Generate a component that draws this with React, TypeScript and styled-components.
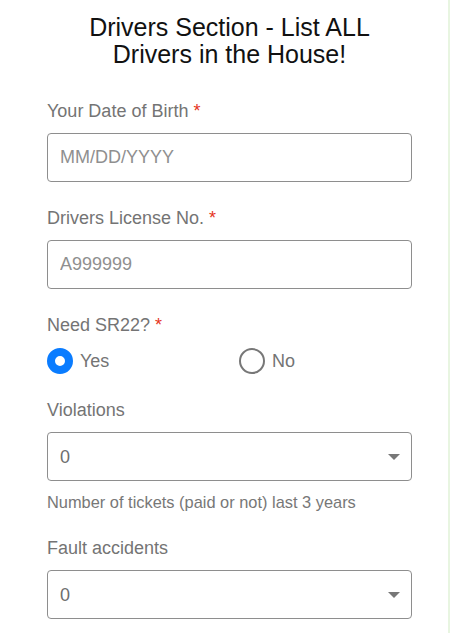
import React from "react";
import styled, { createGlobalStyle } from "styled-components";

const GlobalStyle = createGlobalStyle`
  html, body {
    margin: 0;
    padding: 0;
    background: #fff;
  }
  body {
    font-family: "Liberation Sans", Arial, Helvetica, sans-serif;
  }
  * {
    box-sizing: border-box;
  }
`;

const App = () => {
  return (
    <Page>
      <GlobalStyle />
      <Form>
        <Title>
          Drivers Section - List ALL
          <br />
          Drivers in the House!
        </Title>

        <Field>
          <Label>
            Your Date of Birth <Required>*</Required>
          </Label>
          <TextInput type="text" placeholder="MM/DD/YYYY" />
        </Field>

        <Field>
          <Label>
            Drivers License No. <Required>*</Required>
          </Label>
          <TextInput type="text" placeholder="A999999" />
        </Field>

        <Field>
          <Label>
            Need SR22? <Required>*</Required>
          </Label>
          <RadioGroup>
            <RadioOption>
              <Radio type="radio" name="sr22" defaultChecked />
              <RadioText>Yes</RadioText>
            </RadioOption>
            <RadioOption>
              <Radio type="radio" name="sr22" />
              <RadioText>No</RadioText>
            </RadioOption>
          </RadioGroup>
        </Field>

        <Field>
          <Label>Violations</Label>
          <SelectWrap>
            <Select defaultValue="0">
              <option value="0">0</option>
              <option value="1">1</option>
              <option value="2">2</option>
              <option value="3">3+</option>
            </Select>
            <Caret />
          </SelectWrap>
          <Helper>Number of tickets (paid or not) last 3 years</Helper>
        </Field>

        <Field>
          <Label>Fault accidents</Label>
          <SelectWrap>
            <Select defaultValue="0">
              <option value="0">0</option>
              <option value="1">1</option>
              <option value="2">2</option>
              <option value="3">3+</option>
            </Select>
            <Caret />
          </SelectWrap>
        </Field>
      </Form>
    </Page>
  );
};

const Caret = () => (
  <CaretIcon width="12" height="6" viewBox="0 0 12 6" aria-hidden="true">
    <path d="M0 0h12L6 6z" fill="#777" />
  </CaretIcon>
);

const Page = styled.div`
  width: 450px;
  min-height: 100vh;
  border-right: 2px solid #e8f5e1;
  padding-bottom: 40px;
`;

const Form = styled.form`
  width: 365px;
  margin-left: 47px;
  display: flex;
  flex-direction: column;
  gap: 25px;
`;

const Title = styled.h1`
  margin: 14px 0 7px;
  font-size: 25px;
  line-height: 27px;
  font-weight: 400;
  color: #111;
  text-align: center;
`;

const Field = styled.div`
  display: flex;
  flex-direction: column;
`;

const Label = styled.label`
  display: block;
  margin-bottom: 11px;
  font-size: 18px;
  line-height: 22px;
  color: #747474;
`;

const Required = styled.span`
  color: #e5341c;
`;

const TextInput = styled.input`
  width: 100%;
  height: 49px;
  padding: 0 12px;
  border: 1px solid #8e8e8e;
  border-radius: 4px;
  font-family: inherit;
  font-size: 18px;
  color: #444;
  background: #fff;
  outline: none;

  &::placeholder {
    color: #8f8f8f;
  }
`;

const RadioGroup = styled.div`
  display: grid;
  grid-template-columns: 192px 1fr;
  height: 26px;
  margin-top: 1px;
`;

const RadioOption = styled.label`
  display: flex;
  align-items: center;
  gap: 7px;
  cursor: pointer;
`;

const Radio = styled.input`
  appearance: none;
  margin: 0;
  width: 26px;
  height: 26px;
  border-radius: 50%;
  border: 2px solid #777;
  background: #fff;
  flex-shrink: 0;

  &:checked {
    border: 8px solid #0a7cff;
  }
`;

const RadioText = styled.span`
  font-size: 18px;
  line-height: 22px;
  color: #747474;
`;

const SelectWrap = styled.div`
  position: relative;
`;

const Select = styled.select`
  appearance: none;
  width: 100%;
  height: 49px;
  padding: 0 40px 0 12px;
  border: 1px solid #8e8e8e;
  border-radius: 4px;
  font-family: inherit;
  font-size: 18px;
  color: #6e6e6e;
  background: #fff;
  outline: none;
`;

const CaretIcon = styled.svg`
  position: absolute;
  right: 12px;
  top: 50%;
  margin-top: -3px;
  pointer-events: none;
`;

const Helper = styled.div`
  margin-top: 11px;
  font-size: 16.4px;
  line-height: 20px;
  color: #777;
`;

export default App;
